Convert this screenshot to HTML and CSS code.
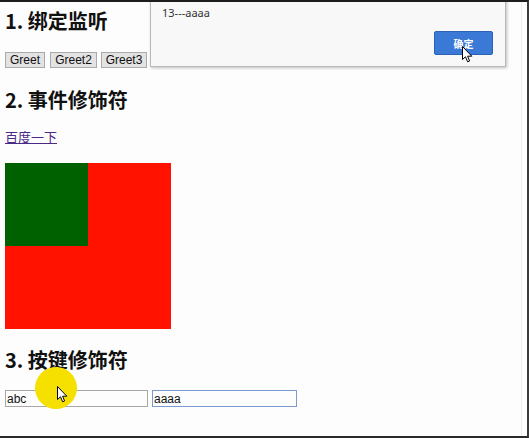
FILE: index.html
```html
<!DOCTYPE html>
<html lang="zh">
<head>
<meta charset="utf-8">
<title>事件</title>
<link rel="stylesheet" href="styles.css">
</head>
<body>
<div class="frame">
  <div class="tabmark"></div>
  <div class="content">
    <h2 class="title t1">1. 绑定监听</h2>
    <div class="btns">
      <button class="btn b1">Greet</button>
      <button class="btn b2">Greet2</button>
      <button class="btn b3">Greet3</button>
    </div>
    <h2 class="title t2">2. 事件修饰符</h2>
    <a class="link" href="#">百度一下</a>
    <div class="outer"><div class="inner"></div></div>
    <h2 class="title t3">3. 按键修饰符</h2>
    <div class="inputs">
      <input class="field" type="text" value="abc">
      <input class="field focused" type="text" value="aaaa">
    </div>
  </div>

  <div class="dialog">
    <div class="msg">13---aaaa</div>
    <div class="dlg-foot"><button class="ok">确定</button></div>
  </div>

  <div class="spot"></div>
  <svg class="cursor c1" width="11" height="17" viewBox="0 0 11 17"><path d="M0.5 0.5 L0.5 13.5 L3.5 10.8 L5.6 15.8 L7.6 15 L5.6 10.2 L9.8 10.2 Z" fill="#fff" stroke="#000" stroke-width="1" stroke-linejoin="round"/></svg>
  <svg class="cursor c2" width="11" height="17" viewBox="0 0 11 17"><path d="M0.5 0.5 L0.5 13.5 L3.5 10.8 L5.6 15.8 L7.6 15 L5.6 10.2 L9.8 10.2 Z" fill="#fff" stroke="#000" stroke-width="1" stroke-linejoin="round"/></svg>
</div>
</body>
</html>
```
FILE: styles.css
```css
html, body {
  margin: 0;
  padding: 0;
  background: #fcfcfc;
}
.frame {
  position: relative;
  width: 529px;
  height: 438px;
  box-sizing: border-box;
  border-top: 2px solid #1d1d1d;
  border-right: 2px solid #3a3a3a;
  border-bottom: 2px solid #2a2a2a;
  overflow: hidden;
  background: #fdfdfd;
  font-family: "Noto Sans CJK SC", "Noto Sans", sans-serif;
}
.frame::after {
  content: "";
  position: absolute;
  right: 5px;
  top: 0;
  bottom: 0;
  width: 1px;
  background: #ececec;
}
.tabmark {
  position: absolute;
  left: 0;
  top: -2px;
  width: 33px;
  height: 2px;
  background: #9fb7d4;
}
.content {
  display: flex;
  flex-direction: column;
  align-items: flex-start;
  padding: 7px 0 0 5px;
}
.title {
  margin: 0;
  font-size: 20px;
  line-height: 24px;
  font-weight: bold;
  color: #111;
  font-family: "Noto Sans CJK SC", "Noto Sans", sans-serif;
}
.btns {
  display: flex;
  gap: 4px;
  margin-top: 19px;
}
.btn {
  height: 16px;
  padding: 0;
  margin: 0;
  font-family: "Liberation Sans", Arial, sans-serif;
  font-size: 12px;
  line-height: 14px;
  color: #111;
  background: #e3e3e3;
  border: 1px solid #aaaaaa;
  border-radius: 0;
}
.b1 { width: 40px; margin-right: 1px; }
.b2 { width: 47px; }
.b3 { width: 46px; }
.t2 { margin-top: 20px; }
.link {
  margin-top: 17px;
  font-family: "Noto Sans CJK SC", sans-serif;
  font-size: 13px;
  line-height: 16px;
  color: #4b2a86;
  text-decoration: underline;
}
.outer {
  margin-top: 18px;
  width: 166px;
  height: 166px;
  background: #ff1200;
}
.inner {
  width: 83px;
  height: 83px;
  background: #006100;
}
.t3 { margin-top: 19px; }
.inputs {
  display: flex;
  gap: 4px;
  margin-top: 18px;
}
.field {
  width: 143px;
  height: 17px;
  box-sizing: border-box;
  margin: 0;
  padding: 0 1px;
  font-family: "Liberation Sans", Arial, sans-serif;
  font-size: 12px;
  color: #111;
  background: #fdfdfd;
  border: 1px solid #a8a8a8;
  outline: none;
}
.field.focused {
  width: 145px;
  border-color: #7b9bd0;
}
.dialog {
  position: absolute;
  left: 150px;
  top: -10px;
  width: 356px;
  height: 75px;
  box-sizing: border-box;
  background: #f8f8f8;
  border: 1px solid #b9b9b9;
  box-shadow: 1px 1px 3px rgba(0,0,0,0.25);
  padding: 13px 12px 0 11px;
  display: flex;
  flex-direction: column;
}
.msg {
  font-family: "Noto Sans", "Liberation Sans", sans-serif;
  font-size: 11px;
  line-height: 14px;
  color: #333;
}
.dlg-foot {
  display: flex;
  justify-content: flex-end;
  margin-top: 11px;
}
.ok {
  width: 59px;
  height: 24px;
  margin: 0;
  padding: 0;
  background: #3a7ad6;
  border: 1px solid #2c62b5;
  border-radius: 2px;
  color: #fff;
  font-family: "Noto Sans CJK SC", sans-serif;
  font-size: 10px;
  font-weight: bold;
}
.spot {
  position: absolute;
  left: 35px;
  top: 365px;
  width: 42px;
  height: 42px;
  border-radius: 50%;
  background: #f6e000;
}
.cursor {
  position: absolute;
}
.c1 { left: 462px; top: 44px; }
.c2 { left: 57px; top: 384px; }
```
